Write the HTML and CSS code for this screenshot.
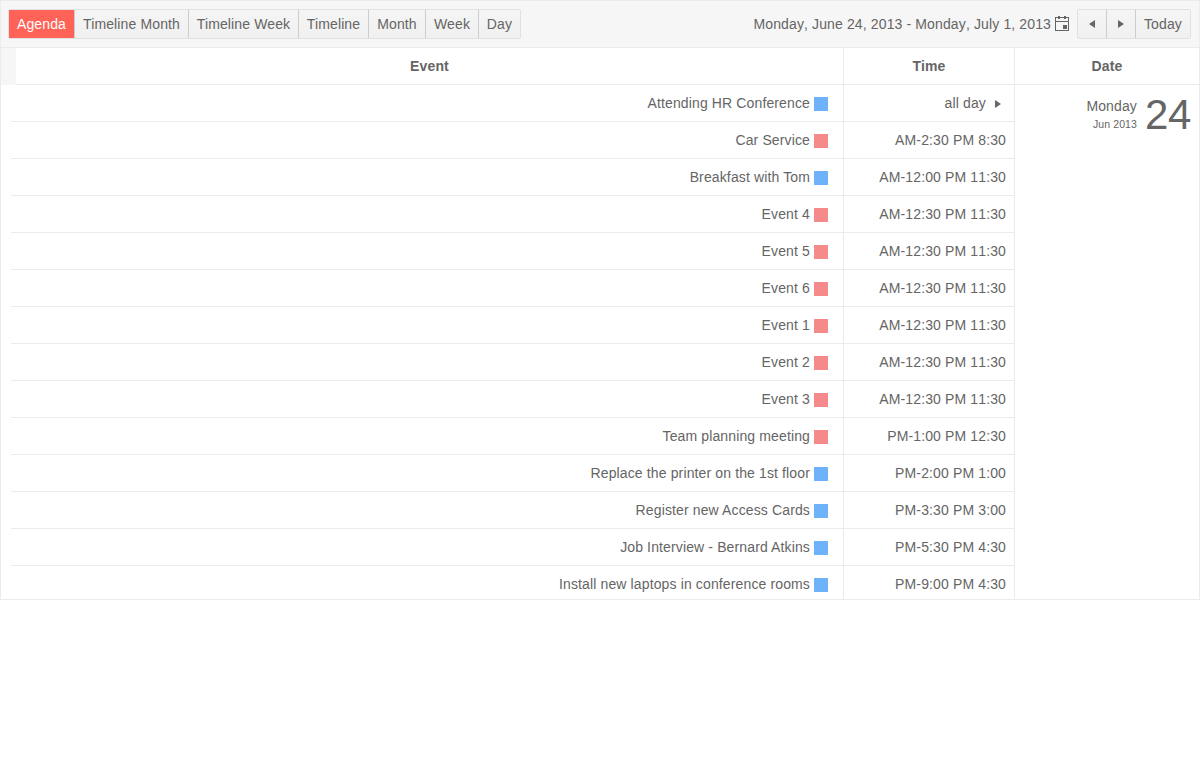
FILE: index.html
```
<!DOCTYPE html>
<html lang="en">
<head>
<meta charset="utf-8">
<title>Scheduler</title>
<link rel="stylesheet" href="styles.css">
</head>
<body>
<div class="scheduler">
  <header class="toolbar">
    <div class="group views">
      <button class="btn active">Agenda</button><button class="btn">Timeline Month</button><button class="btn">Timeline Week</button><button class="btn">Timeline</button><button class="btn">Month</button><button class="btn">Week</button><button class="btn">Day</button>
    </div>
    <div class="nav">
      <span class="range">Monday, June 24, 2013 - Monday, July 1, 2013</span>
      <svg class="calendar" width="14" height="15" viewBox="0 0 14 15" shape-rendering="crispEdges"><path fill="#656565" fill-rule="evenodd" d="M0 1h3V0h2v1h4V0h2v1h3v14H0zM1 2v3h12V2h-2v1H9V2H5v1H3V2zM1 6v8h12V6zM8 9h4v4H8z"/></svg>
      <div class="group pager">
        <button class="btn arrow" aria-label="Previous"><svg width="6" height="8" viewBox="0 0 6 8"><path fill="#656565" d="M6 0v8L0 4z"/></svg></button><button class="btn arrow" aria-label="Next"><svg width="6" height="8" viewBox="0 0 6 8"><path fill="#656565" d="M0 0v8l6-4z"/></svg></button><button class="btn">Today</button>
      </div>
    </div>
  </header>
  <div class="head">
    <div class="filler"></div>
    <div class="th">Event</div>
    <div class="th line">Time</div>
    <div class="th line">Date</div>
  </div>
  <div class="body">
    <div class="rows">
      <div class="row"><div class="event">Attending HR Conference<i class="mark blue"></i></div><div class="time">all day<svg class="more" width="6" height="8" viewBox="0 0 6 8"><path fill="#656565" d="M0 0v8l6-4z"/></svg></div></div>
      <div class="row"><div class="event">Car Service<i class="mark"></i></div><div class="time">AM-2:30 PM 8:30</div></div>
      <div class="row"><div class="event">Breakfast with Tom<i class="mark blue"></i></div><div class="time">AM-12:00 PM 11:30</div></div>
      <div class="row"><div class="event">Event 4<i class="mark"></i></div><div class="time">AM-12:30 PM 11:30</div></div>
      <div class="row"><div class="event">Event 5<i class="mark"></i></div><div class="time">AM-12:30 PM 11:30</div></div>
      <div class="row"><div class="event">Event 6<i class="mark"></i></div><div class="time">AM-12:30 PM 11:30</div></div>
      <div class="row"><div class="event">Event 1<i class="mark"></i></div><div class="time">AM-12:30 PM 11:30</div></div>
      <div class="row"><div class="event">Event 2<i class="mark"></i></div><div class="time">AM-12:30 PM 11:30</div></div>
      <div class="row"><div class="event">Event 3<i class="mark"></i></div><div class="time">AM-12:30 PM 11:30</div></div>
      <div class="row"><div class="event">Team planning meeting<i class="mark"></i></div><div class="time">PM-1:00 PM 12:30</div></div>
      <div class="row"><div class="event">Replace the printer on the 1st floor<i class="mark blue"></i></div><div class="time">PM-2:00 PM 1:00</div></div>
      <div class="row"><div class="event">Register new Access Cards<i class="mark blue"></i></div><div class="time">PM-3:30 PM 3:00</div></div>
      <div class="row"><div class="event">Job Interview - Bernard Atkins<i class="mark blue"></i></div><div class="time">PM-5:30 PM 4:30</div></div>
      <div class="row"><div class="event">Install new laptops in conference rooms<i class="mark blue"></i></div><div class="time">PM-9:00 PM 4:30</div></div>
    </div>
    <div class="date">
      <div class="label"><span class="weekday">Monday</span><span class="month">Jun 2013</span></div>
      <strong class="day">24</strong>
    </div>
  </div>
</div>
</body>
</html>
```
FILE: styles.css
```
* { box-sizing: border-box; }
body {
  margin: 0;
  background: #fff;
  color: #656565;
  font: 14px/20px "Liberation Sans", Arial, sans-serif;
  letter-spacing: .13px;
}
.scheduler {
  display: flex;
  flex-direction: column;
  height: 600px;
  border: 1px solid #ebebeb;
}
.toolbar {
  display: flex;
  flex: none;
  justify-content: space-between;
  height: 47px;
  padding: 8px 8px 0 7px;
  background: #f6f6f6;
  border-bottom: 1px solid #ebebeb;
}
.group {
  display: grid;
  height: 30px;
  border: 1px solid #e1e1e1;
  border-radius: 2px;
}
.views { grid-template-columns: 65px 114px 110px 70px 57px 53px 42px; }
.pager { grid-template-columns: 28px 29px 55px; }
.btn {
  height: 28px;
  margin: 0;
  padding: 0;
  border: 0;
  background: linear-gradient(#f5f5f5, #f0f0f0);
  color: inherit;
  font: inherit;
  letter-spacing: inherit;
  line-height: 28px;
  text-align: center;
  white-space: nowrap;
}
.btn + .btn {
  height: 30px;
  margin: -1px 0;
  border: solid #e1e1e1;
  border-width: 1px 0;
  border-left: 1px solid #cdcdcd;
}
.btn.active {
  background: #ff6358;
  color: #fff;
}
.arrow {
  display: flex;
  align-items: center;
  padding: 0 0 0 11px;
}
.arrow + .arrow { padding-left: 11px; }
.nav { display: flex; }
.range {
  font-kerning: none;
  line-height: 30px;
}
.calendar { margin: 7px 8px 0 4px; }
.head {
  display: grid;
  flex: none;
  grid-template-columns: 15px 827px 171px 185px;
  height: 37px;
}
.filler { background: #f6f6f6; }
.th {
  border-bottom: 1px solid #ebebeb;
  font-weight: bold;
  line-height: 36px;
  text-align: center;
}
.line { border-left: 1px solid #ebebeb; }
.body {
  display: grid;
  flex: 1;
  grid-template-columns: 1013px 185px;
  min-height: 0;
  overflow: hidden;
}
.rows { padding-left: 10px; }
.row {
  display: grid;
  grid-template-columns: 832px 171px;
  height: 37px;
  border-bottom: 1px solid #ebebeb;
}
.event, .time {
  display: flex;
  justify-content: flex-end;
  line-height: 36px;
}
.event { padding-right: 15px; }
.time {
  padding-right: 8px;
  border-left: 1px solid #ebebeb;
  font-kerning: none;
}
.mark {
  width: 14px;
  height: 14px;
  margin: 12px 0 0 4px;
  background: #f58a8a;
}
.mark.blue { background: #6eb3fa; }
.more { margin: 15px 5px 0 9px; }
.date {
  display: flex;
  justify-content: flex-end;
  padding: 8px 8px 0 0;
  border-left: 1px solid #ebebeb;
}
.label {
  display: flex;
  flex-direction: column;
  margin: 3px 8px 0 0;
  text-align: right;
}
.month {
  font-size: 10.5px;
  letter-spacing: .1px;
  line-height: 17px;
}
.day {
  font-size: 42px;
  font-weight: normal;
  letter-spacing: -.35px;
  line-height: 44px;
}
```
